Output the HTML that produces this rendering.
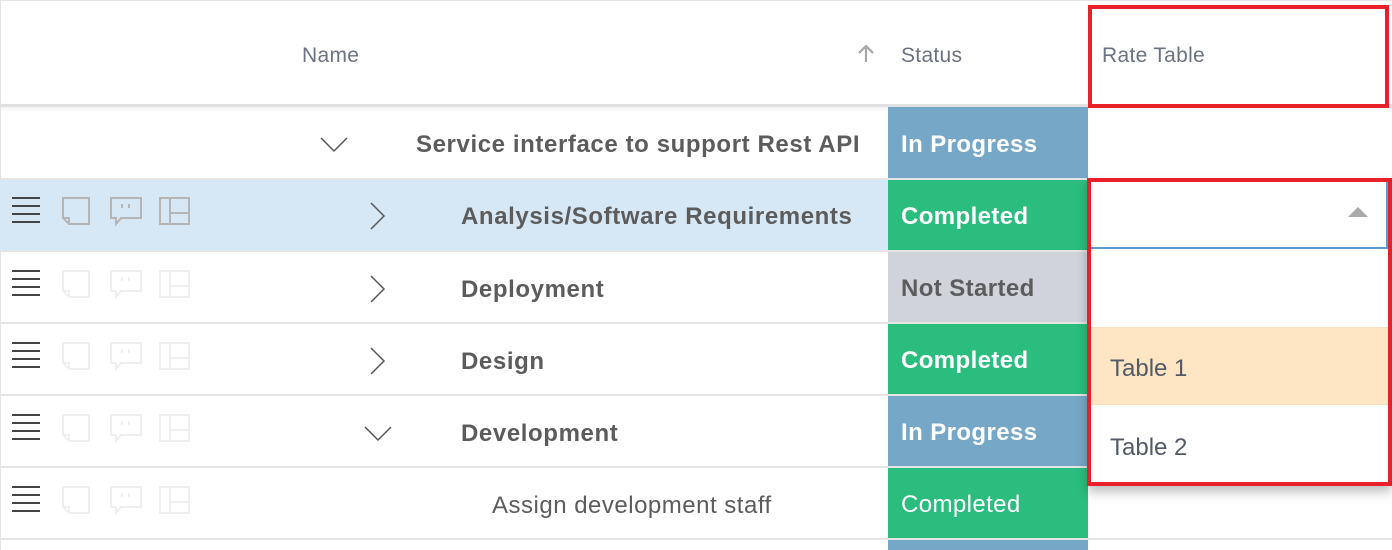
<!DOCTYPE html>
<html><head><style>
*{margin:0;padding:0;box-sizing:border-box}
body{width:1392px;height:550px;overflow:hidden;background:#fff;font-family:"Liberation Sans",sans-serif;position:relative;color:#5f5f5f}
.a{position:absolute}
.hdr{color:#6b7280;font-size:21px;letter-spacing:0.3px}
.sep{position:absolute;left:0;width:1392px;height:2px;background:#e4e4e4}
.st{position:absolute;left:888px;width:200px;height:72px;color:#fff;font-weight:bold;font-size:24px;letter-spacing:0.4px;padding-left:13px;padding-top:4px;display:flex;align-items:center}
.nm{position:absolute;font-weight:bold;font-size:24px;letter-spacing:0.6px;color:#5c5c5c}
</style></head><body>
<div class="a" style="left:0;top:0;width:1392px;height:1px;background:#e5e5e5"></div>
<div class="a" style="left:0;top:0;width:1px;height:550px;background:#e5e5e5"></div>
<div class="a hdr" style="left:302px;top:44px">Name</div>
<svg class="a" style="left:856px;top:44px" width="20" height="20"><path d="M10 2V18M3 9L10 2L17 9" stroke="#a8a8a8" stroke-width="2.2" fill="none"/></svg>
<div class="a hdr" style="left:901px;top:44px">Status</div>
<div class="a hdr" style="left:1102px;top:44px">Rate Table</div>
<div class="a" style="left:0;top:104px;width:1392px;height:3px;background:#e0e0e0;box-shadow:0 2px 4px rgba(0,0,0,.08)"></div>
<div class="a" style="left:1088px;top:5px;width:301px;height:103px;border:4px solid #e8202a"></div>

<div class="a" style="left:0;top:180px;width:888px;height:70px;background:#d6e7f5"></div>

<div class="sep" style="top:178px"></div>
<div class="sep" style="top:250px"></div>
<div class="sep" style="top:322px"></div>
<div class="sep" style="top:394px"></div>
<div class="sep" style="top:466px"></div>
<div class="sep" style="top:538px"></div>

<div class="st" style="top:107px;height:71px;background:#76a7c7">In Progress</div>
<div class="st" style="top:180px;height:70px;background:#2bbd7e">Completed</div>
<div class="st" style="top:252px;height:70px;background:#d0d3da;color:#5c5c5c">Not Started</div>
<div class="st" style="top:324px;height:70px;background:#2bbd7e">Completed</div>
<div class="st" style="top:396px;height:70px;background:#76a7c7">In Progress</div>
<div class="st" style="top:468px;height:70px;background:#2bbd7e;font-weight:normal">Completed</div>
<div class="st" style="top:540px;height:10px;background:#76a7c7"></div>

<svg class="a" style="left:320px;top:137px" width="28" height="16"><path d="M1 1L14 14L27 1" stroke="#555" stroke-width="1.5" fill="none"/></svg>
<svg class="a" style="left:370px;top:202px" width="16" height="28"><path d="M1 1L14 14L1 27" stroke="#555" stroke-width="1.5" fill="none"/></svg>
<svg class="a" style="left:370px;top:275px" width="16" height="28"><path d="M1 1L14 14L1 27" stroke="#555" stroke-width="1.5" fill="none"/></svg>
<svg class="a" style="left:370px;top:347px" width="16" height="28"><path d="M1 1L14 14L1 27" stroke="#555" stroke-width="1.5" fill="none"/></svg>
<svg class="a" style="left:364px;top:426px" width="28" height="16"><path d="M1 1L14 14L27 1" stroke="#555" stroke-width="1.5" fill="none"/></svg>

<div class="nm" style="left:416px;top:131px">Service interface to support Rest API</div>
<div class="nm" style="left:461px;top:203px">Analysis/Software Requirements</div>
<div class="nm" style="left:461px;top:276px">Deployment</div>
<div class="nm" style="left:461px;top:348px">Design</div>
<div class="nm" style="left:461px;top:420px">Development</div>
<div class="nm" style="left:492px;top:492px;font-weight:normal;letter-spacing:0.5px">Assign development staff</div>

<svg class="a" style="left:0;top:180px" width="200" height="360">
<defs>
<g id="ham"><path d="M12 0H40M12 8H40M12 16H40M12 24H40" stroke="#444" stroke-width="2"/></g>
<g id="ico" fill="none" stroke-width="2">
<path d="M63 0H89V26H69L63 20Z M63 20H69V26"/>
<path d="M111 0H141V20H121L116 26V20H111Z M122 6V10M129 6V10"/>
<path d="M160 0H189V26H160Z M170 0V26M170 15H189"/>
</g>
</defs>
<g transform="translate(0,18)"><use href="#ham"/><use href="#ico" stroke="#b5b5b5"/></g>
<g transform="translate(0,91)"><use href="#ham"/><use href="#ico" stroke="#efefef"/></g>
<g transform="translate(0,163)"><use href="#ham"/><use href="#ico" stroke="#efefef"/></g>
<g transform="translate(0,235)"><use href="#ham"/><use href="#ico" stroke="#efefef"/></g>
<g transform="translate(0,307)"><use href="#ham"/><use href="#ico" stroke="#efefef"/></g>
</svg>

<div class="a" style="left:1087px;top:178px;width:305px;height:308px;background:#fff;box-shadow:0 6px 10px rgba(0,0,0,.25)"></div>
<div class="a" style="left:1090px;top:181px;width:298px;height:68px;border:2px solid #5b9bd5;border-top:none;border-left:none;background:#fff"></div>
<svg class="a" style="left:1348px;top:206px" width="20" height="12"><path d="M0 11L10 1L20 11Z" fill="#aaa"/></svg>
<div class="a" style="left:1090px;top:327px;width:300px;height:78px;background:#fee5c3;border-top:1px dotted #ddd;border-bottom:1px dotted #ddd"></div>
<div class="a" style="left:1110px;top:355px;font-size:24px;color:#515a66">Table 1</div>
<div class="a" style="left:1110px;top:434px;font-size:24px;color:#515a66">Table 2</div>
<div class="a" style="left:1087px;top:178px;width:305px;height:308px;border:4px solid #e8202a"></div>
</body></html>
